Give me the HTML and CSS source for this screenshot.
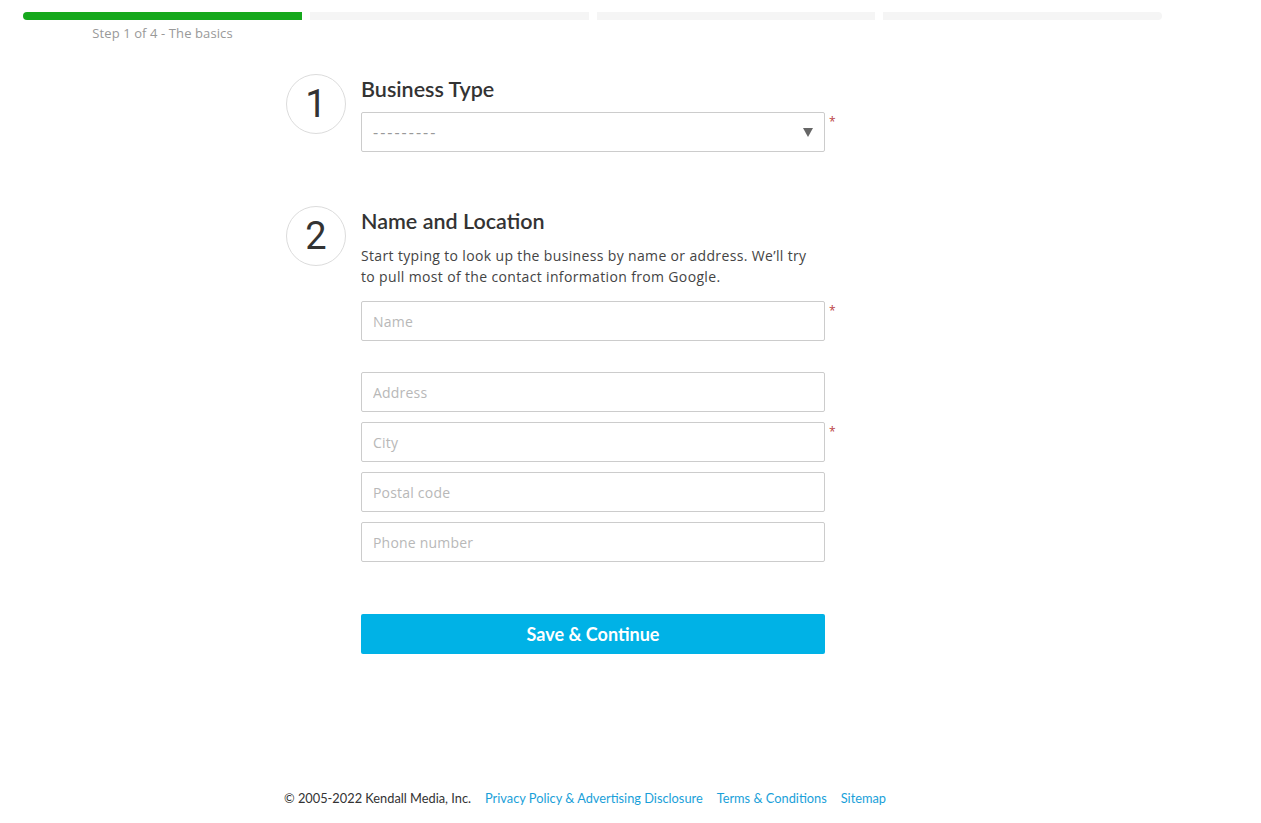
FILE: index.html
```html
<!DOCTYPE html>
<html lang="en">
<head>
<meta charset="utf-8">
<title>Step 1 of 4 - The basics</title>
<link rel="stylesheet" href="styles.css">
</head>
<body>
<div class="progress">
  <div class="bars">
    <div class="seg seg-done"></div>
    <div class="seg"></div>
    <div class="seg"></div>
    <div class="seg seg-last"></div>
  </div>
  <div class="labels">
    <div class="step-label">Step 1 of 4 - The basics</div>
  </div>
</div>

<main class="form">
  <section class="section sec1">
    <div class="num">1</div>
    <div class="body">
      <h2 class="title">Business Type</h2>
      <div class="row">
        <div class="select">
          <span class="select-text">---------</span>
          <span class="caret"></span>
        </div>
        <span class="req">*</span>
      </div>
    </div>
  </section>

  <section class="section sec2">
    <div class="num">2</div>
    <div class="body">
      <h2 class="title">Name and Location</h2>
      <p class="desc">Start typing to look up the business by name or address. We’ll try to pull most of the contact information from Google.</p>
      <div class="row"><input class="field" placeholder="Name"><span class="req">*</span></div>
      <div class="row gap-top"><input class="field" placeholder="Address"><span class="req"></span></div>
      <div class="row"><input class="field" placeholder="City"><span class="req">*</span></div>
      <div class="row"><input class="field" placeholder="Postal code"><span class="req"></span></div>
      <div class="row"><input class="field" placeholder="Phone number"><span class="req"></span></div>
      <div class="row btn-row"><button class="btn">Save &amp; Continue</button></div>
    </div>
  </section>
</main>

<footer class="footer">
  <span class="copy">© 2005-2022 Kendall Media, Inc.</span>
  <a class="link" href="#">Privacy Policy &amp; Advertising Disclosure</a>
  <a class="link" href="#">Terms &amp; Conditions</a>
  <a class="link" href="#">Sitemap</a>
</footer>
</body>
</html>
```

FILE: styles.css
```css
* { box-sizing: border-box; }
html, body { margin: 0; padding: 0; background: #fff; }
body {
  font-family: "Open Sans", "Liberation Sans", sans-serif;
  color: #333;
  width: 1261px;
  height: 823px;
  display: flex;
  flex-direction: column;
}

.progress { padding: 12px 0 0 23px; }
.bars { display: flex; gap: 8px; width: 1139px; }
.seg { flex: 1; height: 8px; background: #f5f5f5; }
.seg-done { background: #16a81c; border-radius: 4px 0 0 4px; }
.seg-last { border-radius: 0 4px 4px 0; }
.labels { width: 279px; text-align: center; }
.step-label {
  font-size: 13px;
  color: #999;
  line-height: 18px;
  margin-top: 4px;
  letter-spacing: 0.1px;
}

.form { padding-left: 286px; padding-top: 32px; }
.section { display: flex; gap: 15px; }
.sec2 { margin-top: 44px; }
.num {
  width: 60px; height: 60px;
  border: 1px solid #dcdcdc;
  border-radius: 50%;
  display: flex; align-items: center; justify-content: center;
  font-family: "Roboto", "Liberation Sans", sans-serif;
  font-size: 38px;
  font-weight: 400;
  color: #333;
  flex: none;
}
.body { width: 480px; display: flex; flex-direction: column; }
.title {
  margin: 0;
  font-family: "Lato", "Liberation Sans", sans-serif;
  font-size: 21.5px;
  font-weight: 600;
  line-height: 30px;
  color: #333;
}
.sec1 .title { margin-bottom: 8px; }
.sec2 .title { margin-bottom: 0; }
.desc {
  margin: 9px 0 14px 0;
  width: 456px;
  font-size: 14px;
  line-height: 21px;
  letter-spacing: 0.35px;
  color: #444;
}
.row { display: flex; align-items: flex-start; margin-bottom: 10px; }
.gap-top { margin-top: 21px; }
.req {
  width: 16px;
  padding-left: 4px;
  font-size: 12px;
  line-height: 12px;
  color: #b44;
  margin-top: 4px;
}
.select, .field {
  width: 464px;
  height: 40px;
  border: 1px solid #ccc;
  border-radius: 2px;
  background: #fff;
}
.select { display: flex; align-items: center; justify-content: space-between; padding: 0 11px; }
.select-text { font-size: 16px; color: #999; letter-spacing: 2px; }
.caret {
  width: 0; height: 0;
  border-left: 5px solid transparent;
  border-right: 5px solid transparent;
  border-top: 9px solid #666;
}
.field {
  padding: 0 11px;
  font-family: "Open Sans", "Liberation Sans", sans-serif;
  font-size: 14px;
  letter-spacing: 0.2px;
  color: #333;
  outline: none;
}
.field::placeholder { color: #b8b8b8; }
.btn-row { margin-top: 42px; }
.btn {
  width: 464px;
  height: 40px;
  border: 0;
  border-radius: 2px;
  background: #00b2e6;
  color: #fff;
  font-family: "Lato", "Liberation Sans", sans-serif;
  font-size: 18px;
  font-weight: 700;
  cursor: pointer;
}

.footer {
  margin-top: auto;
  padding: 0 0 16px 284px;
  display: flex;
  gap: 14px;
  font-family: "Lato", "Liberation Sans", sans-serif;
  font-size: 12.8px;
  line-height: 18px;
}
.copy { color: #333; }
.link { color: #1a9fd9; text-decoration: none; }
```
